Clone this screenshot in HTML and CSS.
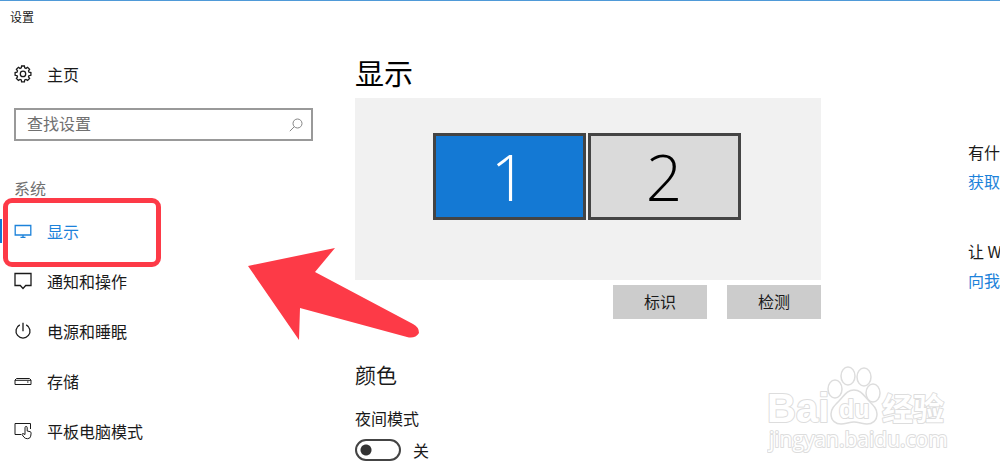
FILE: index.html
```
<!DOCTYPE html>
<html lang="zh-CN">
<head>
    <meta charset="UTF-8">
    <meta name="viewport" content="width=device-width, initial-scale=1.0">
    <title>设置</title>
    <link rel="stylesheet" href="styles.css">
</head>
<body>
    <header class="title-bar">设置</header>

    <div class="page">
        <nav class="sidebar">
            <a href="#" class="nav-item home">
                <svg class="icon" viewBox="0 0 18 18">
                    <path d="M7.600 1h2.800l.3 1.900 1.300.5 1.600-1.100 2 2-1.100 1.600.5 1.300 1.900.3v2.800l-1.900.3-.5 1.300 1.100 1.600-2 2-1.600-1.100-1.300.5-.3 1.900H7.600l-.3-1.900-1.300-.5-1.600 1.100-2-2 1.100-1.600-.5-1.300-1.900-.3V7.500l1.900-.3.500-1.300-1.100-1.600 2-2L6 3.400l1.300-.5z"/>
                    <circle cx="9" cy="8.900" r="2.700"/>
                </svg>
                主页
            </a>

            <form class="search">
                <input type="text" placeholder="查找设置" aria-label="查找设置">
                <button type="submit" aria-label="查找">
                    <svg viewBox="0 0 14 14">
                        <circle cx="8.500" cy="5.500" r="4.500"/>
                        <path d="M5.300 8.700L.8 13.200"/>
                    </svg>
                </button>
            </form>

            <h2 class="group-title">系统</h2>

            <a href="#" class="nav-item active">
                <svg class="icon" viewBox="0 0 18 18">
                    <path d="M1.200 3.500h15.600v9.500H1.200zM9 13v2M6.500 15.300h5"/>
                </svg>
                显示
            </a>
            <a href="#" class="nav-item">
                <svg class="icon" viewBox="0 0 18 18">
                    <path d="M1 1.500h16v12h-5.300L9 16.500l-2.700-3H1z"/>
                </svg>
                通知和操作
            </a>
            <a href="#" class="nav-item">
                <svg class="icon" viewBox="0 0 18 18">
                    <path d="M9 .8v8.400M5.800 2.800a7 7 0 1 0 6.400 0"/>
                </svg>
                电源和睡眠
            </a>
            <a href="#" class="nav-item">
                <svg class="icon thin" viewBox="0 0 18 18">
                    <path d="M2.500 6.500h13l1.500 1.500v4.500H1V8zM1 8.300h16M13 10h1.500"/>
                </svg>
                存储
            </a>
            <a href="#" class="nav-item">
                <svg class="icon thin" viewBox="0 0 18 18">
                    <path d="M7 12.500H1v-11h15.500V7"/>
                    <path d="M11 11V5.600a1.100 1.100 0 0 1 2.200 0V9l3 .7q1 .3.900 1.500l-.4 3q-.5 2.500-3.200 2.500-2.500 0-3.500-1.500l-2.200-2.900q.8-1.600 3.200.2z"/>
                </svg>
                平板电脑模式
            </a>
        </nav>

        <main class="content">
            <h1>显示</h1>
            <div class="monitors">
                <button type="button" class="monitor selected">1</button>
                <button type="button" class="monitor">2</button>
            </div>
            <div class="button-group">
                <button type="button">标识</button>
                <button type="button">检测</button>
            </div>

            <h2>颜色</h2>
            <label class="toggle-label" for="nightMode">夜间模式</label>
            <div class="toggle">
                <input type="checkbox" id="nightMode">
                <span>关</span>
            </div>
        </main>

        <aside class="help">
            <p>有什</p>
            <a href="#">获取</a>
            <p>让 W</p>
            <a href="#">向我</a>
        </aside>
    </div>

    <svg class="arrow" viewBox="0 0 172 92">
        <path d="M0 18L87 0 67 24l98 52q6 3 6 9-4 6-12 4L52 60l-1 32z"/>
    </svg>

    <svg class="watermark" viewBox="0 0 182 92">
        <g class="paw">
            <ellipse cx="68" cy="24" rx="7" ry="9"/>
            <ellipse cx="81" cy="11" rx="7" ry="9"/>
            <ellipse cx="97" cy="12" rx="7" ry="9"/>
            <ellipse cx="106" cy="28" rx="7" ry="9"/>
            <path d="M87 25c7 0 10 6 15 11s8 8 8 13c0 7-5 10-10 10-5 0-8-2-13-2s-8 2-13 2c-5 0-10-3-10-10 0-5 3-8 8-13s8-11 15-11z"/>
        </g>
        <text class="logo" x="0" y="57">Bai</text>
        <text class="logo-du" x="72" y="53">du</text>
        <text class="logo-cn" x="115" y="55">经验</text>
        <text class="site" x="2" y="82">jingyan.baidu.com</text>
    </svg>
</body>
</html>
```
FILE: styles.css
```
*,
*::before,
*::after {
    box-sizing: border-box;
}

body {
    position: relative;
    margin: 0;
    min-height: 100vh;
    overflow: hidden;
    border-top: 1px solid #4f9ad8;
    background-color: #ffffff;
    color: #1a1a1a;
    font-family: "Noto Sans CJK SC", sans-serif;
    font-size: 16px;
    line-height: 24px;
}

h1, h2, p {
    margin: 0;
    font-weight: normal;
}

a {
    color: #1c82da;
    text-decoration: none;
}

button {
    border: none;
    padding: 0;
    color: inherit;
    font-family: inherit;
    font-size: 16px;
    cursor: pointer;
}

svg {
    fill: none;
    stroke: currentColor;
}

.title-bar {
    padding: 4px 10px;
    font-size: 12px;
}

.page {
    display: flex;
}

.sidebar {
    flex: 0 0 313px;
    margin-right: 42px;
}

.nav-item {
    position: relative;
    display: flex;
    align-items: center;
    gap: 15px;
    height: 50px;
    padding-left: 14px;
    color: #1a1a1a;
}

.icon {
    width: 18px;
    height: 18px;
    stroke-width: 1.3;
}

.thin {
    stroke-width: 1;
}

.home {
    margin: 16px 0 9px;
}

.search {
    display: flex;
    height: 33px;
    margin-left: 14px;
    border: 2px solid #999999;
}

.search input {
    flex: 1;
    min-width: 0;
    border: none;
    padding: 0 11px 3px;
    background: none;
    font-family: inherit;
    font-size: 16px;
    outline: none;
}

.search input::placeholder {
    color: #707070;
}

.search button {
    width: 22px;
    background: none;
    color: #858585;
}

.search button svg {
    display: block;
    width: 14px;
    height: 14px;
}

.group-title {
    margin: 35px 0 6px;
    padding-left: 14px;
    color: #707070;
    font-size: 16px;
}

.nav-item.active {
    color: #1c82da;
}

.active::before {
    content: "";
    position: absolute;
    left: 0;
    top: 13px;
    width: 2px;
    height: 24px;
    background-color: #1479d4;
}

/* red frame round the current item */
.active::after {
    content: "";
    position: absolute;
    left: 3px;
    top: -8px;
    width: 158px;
    height: 69px;
    border: 5px solid #fd3a47;
    border-radius: 9px;
}

.content {
    flex: 0 0 466px;
    padding-top: 18px;
}

.content h1 {
    padding-bottom: 4px;
    color: #000000;
    font-size: 29px;
    line-height: 43px;
}

.monitors {
    display: flex;
    justify-content: center;
    gap: 2px;
    height: 182px;
    padding: 35px 3px 60px 0;
    background-color: #f1f1f1;
}

.monitor {
    width: 153px;
    border: 3px solid #444444;
    background-color: #dadada;
    color: #000000;
    font-family: "Open Sans", sans-serif;
    font-size: 64px;
    font-weight: 300;
    line-height: 80px;
}

.selected {
    background-color: #1479d4;
    color: #ffffff;
}

.button-group {
    display: flex;
    justify-content: flex-end;
    gap: 20px;
    margin-top: 5px;
}

.button-group button {
    width: 94px;
    height: 34px;
    padding-bottom: 2px;
    background-color: #cccccc;
}

.content h2 {
    margin-top: 39px;
    font-size: 21px;
    line-height: 32px;
}

.toggle-label {
    display: block;
    margin-top: 16px;
}

.toggle {
    display: flex;
    align-items: center;
    gap: 12px;
    margin-top: 8px;
}

.toggle input {
    appearance: none;
    width: 46px;
    height: 22px;
    margin: 0;
    border: 2px solid #444444;
    border-radius: 11px;
    background: radial-gradient(circle at 9px 9px, #333333 5px, transparent 6px);
}

.help {
    flex: 1;
    min-width: 0;
    margin-left: 147px;
    padding-top: 107px;
    white-space: nowrap;
}

.help a {
    display: block;
    margin: 5px 0 46px;
}

.arrow {
    position: absolute;
    left: 248px;
    top: 247px;
    width: 172px;
    height: 92px;
    fill: #fd3a47;
    stroke: none;
}

.watermark {
    position: absolute;
    left: 767px;
    top: 364px;
    width: 182px;
    height: 92px;
    fill: #ffffff;
    stroke: #dddddd;
    stroke-width: 2;
    stroke-linejoin: round;
}

.watermark text {
    paint-order: stroke;
    font-weight: bold;
}

.paw {
    stroke-width: 1.5;
}

.logo {
    font-family: "Liberation Sans", sans-serif;
    font-size: 40px;
}

.logo-du {
    font-family: "Liberation Sans", sans-serif;
    font-size: 25px;
}

.logo-cn {
    font-size: 31px;
}

.watermark .site {
    font-family: "Open Sans", sans-serif;
    font-size: 21px;
    font-weight: normal;
}
```
